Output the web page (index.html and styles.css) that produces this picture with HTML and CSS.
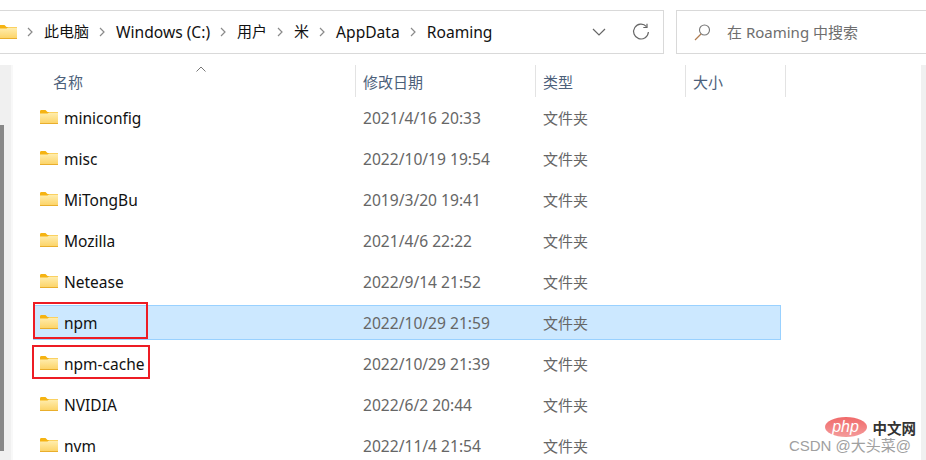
FILE: index.html
```html
<!DOCTYPE html>
<html lang="zh-CN">
  <head>
    <meta charset="UTF-8" />
    <title>Roaming</title>
    <link rel="stylesheet" href="styles.css">
  </head>
  <body>
    <svg class="defs" width="0" height="0">
      <defs>
        <linearGradient id="folderFill" x1="0" y1="0" x2="0" y2="1">
          <stop offset="0" stop-color="#ffeeb0" />
          <stop offset="1" stop-color="#fcd263" />
        </linearGradient>
        <symbol id="folder" viewBox="0 0 18 14">
          <path d="M0 1.5C0 .7.5 0 1.3 0h4.2l2 2H18v3H0z" fill="#f5b312" />
          <path d="M0 3.5h7.5l1.5-1H18V14H0z" fill="url(#folderFill)" />
          <path d="M0 13h18v1H0z" fill="#e9ae2c" />
        </symbol>
        <symbol id="chev" viewBox="0 0 6 10">
          <path d="M1 1l4 4-4 4" fill="none" stroke="#8a8a8a" stroke-width="1.2" />
        </symbol>
      </defs>
    </svg>

    <div class="toolbar">
      <div class="address">
        <svg class="crumb-folder"><use href="#folder" /></svg>
        <svg class="chev"><use href="#chev" /></svg>
        <span class="cjk">此电脑</span>
        <svg class="chev"><use href="#chev" /></svg>
        <span>Windows (C:)</span>
        <svg class="chev"><use href="#chev" /></svg>
        <span class="cjk">用户</span>
        <svg class="chev"><use href="#chev" /></svg>
        <span class="cjk">米</span>
        <svg class="chev"><use href="#chev" /></svg>
        <span>AppData</span>
        <svg class="chev"><use href="#chev" /></svg>
        <span>Roaming</span>
        <div class="address-tools">
          <svg width="14" height="8" viewBox="0 0 14 8"><path d="M1 1l6 6 6-6" fill="none" stroke="#666" stroke-width="1.2" /></svg>
          <svg width="18" height="18" viewBox="0 0 18 18"><path d="M14.5 3.6A7.4 7.4 0 1 0 16.4 9" fill="none" stroke="#666" stroke-width="1.2" /><path d="M15 .8v3.7h-3.7" fill="none" stroke="#666" stroke-width="1.2" /></svg>
        </div>
      </div>
      <div class="search">
        <svg width="17" height="17" viewBox="0 0 17 17"><circle cx="10.5" cy="6" r="5" fill="none" stroke="#777" stroke-width="1.1" /><path d="M7 10l-6 6" stroke="#b07c50" stroke-width="1.2" /></svg>
        <span>在 Roaming 中搜索</span>
      </div>
    </div>

    <div class="main">
      <div class="left-track"><div class="left-thumb"></div></div>
      <div class="content">
        <div class="sort-arrow">
          <svg width="10" height="6" viewBox="0 0 10 6"><path d="M.5 5.5L5 1l4.5 4.5" fill="none" stroke="#777" stroke-width="1" /></svg>
        </div>
        <div class="header">
          <div class="col col-name">名称</div>
          <div class="col col-date">修改日期</div>
          <div class="col col-type">类型</div>
          <div class="col col-size">大小</div>
        </div>

        <div class="row">
          <div class="cell-name"><svg class="folder"><use href="#folder" /></svg>miniconfig</div>
          <div class="cell-date">2021/4/16 20:33</div>
          <div class="cell-type">文件夹</div>
        </div>
        <div class="row">
          <div class="cell-name"><svg class="folder"><use href="#folder" /></svg>misc</div>
          <div class="cell-date">2022/10/19 19:54</div>
          <div class="cell-type">文件夹</div>
        </div>
        <div class="row">
          <div class="cell-name"><svg class="folder"><use href="#folder" /></svg>MiTongBu</div>
          <div class="cell-date">2019/3/20 19:41</div>
          <div class="cell-type">文件夹</div>
        </div>
        <div class="row">
          <div class="cell-name"><svg class="folder"><use href="#folder" /></svg>Mozilla</div>
          <div class="cell-date">2021/4/6 22:22</div>
          <div class="cell-type">文件夹</div>
        </div>
        <div class="row">
          <div class="cell-name"><svg class="folder"><use href="#folder" /></svg>Netease</div>
          <div class="cell-date">2022/9/14 21:52</div>
          <div class="cell-type">文件夹</div>
        </div>
        <div class="row selected">
          <div class="cell-name"><svg class="folder"><use href="#folder" /></svg>npm</div>
          <div class="cell-date">2022/10/29 21:59</div>
          <div class="cell-type">文件夹</div>
          <div class="mark mark-npm"></div>
        </div>
        <div class="row">
          <div class="cell-name"><svg class="folder"><use href="#folder" /></svg>npm-cache</div>
          <div class="cell-date">2022/10/29 21:39</div>
          <div class="cell-type">文件夹</div>
          <div class="mark mark-cache"></div>
        </div>
        <div class="row">
          <div class="cell-name"><svg class="folder"><use href="#folder" /></svg>NVIDIA</div>
          <div class="cell-date">2022/6/2 20:44</div>
          <div class="cell-type">文件夹</div>
        </div>
        <div class="row">
          <div class="cell-name"><svg class="folder"><use href="#folder" /></svg>nvm</div>
          <div class="cell-date">2022/11/4 21:54</div>
          <div class="cell-type">文件夹</div>
        </div>
      </div>
      <div class="right-track"></div>
    </div>

    <div class="watermark">
      <div class="wm-top"><span class="wm-logo">php</span><span class="wm-cn">中文网</span></div>
      <div class="wm-csdn">CSDN @大头菜@</div>
    </div>
  </body>
</html>
```

FILE: styles.css
```css
html,
body {
  margin: 0;
  padding: 0;
}
body {
  width: 926px;
  height: 460px;
  overflow: hidden;
  position: relative;
  background: #fff;
  color: #111;
  font-family: "Noto Sans", "Open Sans", "Noto Sans CJK SC", sans-serif;
  font-size: 15px;
}
.defs {
  display: block;
  height: 0;
}
.toolbar {
  height: 65px;
  padding-top: 10px;
  box-sizing: border-box;
  display: flex;
  margin-left: -10px;
}
.address {
  width: 674px;
  height: 44px;
  box-sizing: border-box;
  border: 1px solid #d9d9d9;
  display: flex;
  align-items: center;
  padding-left: 8px;
  font-size: 15.6px;
}
.address .cjk {
  font-size: 15px;
  padding-bottom: 3px;
}
.crumb-folder {
  width: 18px;
  height: 14px;
}
.chev {
  width: 6px;
  height: 10px;
  margin: 0 11px 0 10px;
}
.address-tools {
  margin-left: auto;
  margin-right: 13px;
  display: flex;
  align-items: center;
  gap: 26px;
}
.search {
  margin-left: 12px;
  flex: 1;
  height: 44px;
  box-sizing: border-box;
  border: 1px solid #d9d9d9;
  border-right: none;
  display: flex;
  align-items: center;
  padding-left: 17px;
  gap: 16px;
  color: #6e6e6e;
}
.search span {
  padding-bottom: 2px;
}
.main {
  display: flex;
  height: 395px;
}
.left-track {
  width: 11px;
  background: #f0f0f0;
  border-right: 2px solid #f8f8f8;
  flex: none;
}
.left-thumb {
  width: 4px;
  height: 326px;
  margin-top: 60px;
  background: #888;
}
.content {
  flex: 1;
  position: relative;
  padding-left: 20px;
}
.right-track {
  width: 5px;
  background: #f0f0f0;
  flex: none;
}
.sort-arrow {
  position: absolute;
  left: 183px;
  top: 1px;
  line-height: 0;
}
.header {
  display: flex;
  height: 32px;
  margin-bottom: 3px;
  color: #4c607a;
}
.col {
  box-sizing: border-box;
  height: 32px;
  padding-top: 6px;
  padding-left: 7px;
  border-right: 1px solid #e3e3e3;
}
.col-name {
  width: 323px;
  padding-left: 20px;
}
.col-date {
  width: 180px;
}
.col-type {
  width: 150px;
}
.col-size {
  width: 100px;
}
.row {
  display: flex;
  align-items: center;
  height: 35px;
  margin-bottom: 6px;
  position: relative;
  box-sizing: border-box;
  width: 748px;
  border: 1px solid transparent;
}
.row.selected {
  background: #cce8ff;
  border-color: #99d1ff;
}
.cell-name {
  width: 322px;
  display: flex;
  align-items: center;
  padding-left: 6px;
  box-sizing: border-box;
  gap: 6px;
  font-size: 15.5px;
}
.folder {
  width: 18px;
  height: 14px;
  flex: none;
  margin-top: -1px;
}
.cell-date {
  width: 180px;
  padding-left: 7px;
  box-sizing: border-box;
  color: #666;
  font-size: 15.6px;
}
.cell-type {
  padding-left: 7px;
  color: #666;
}
.mark {
  position: absolute;
  box-sizing: border-box;
  border: 2px solid #ed1c24;
}
.mark-npm {
  left: -1px;
  top: -4px;
  width: 115px;
  height: 37px;
}
.mark-cache {
  left: -2px;
  top: -2px;
  width: 118px;
  height: 34px;
}
.watermark {
  position: absolute;
  right: 10px;
  top: 417px;
  text-align: right;
}
.wm-top {
  display: flex;
  align-items: center;
  justify-content: flex-end;
  height: 20px;
}
.wm-logo {
  width: 42px;
  height: 20px;
  border-radius: 50%;
  background: linear-gradient(#f06a6a, #f49a9a);
  color: #fff;
  font-family: "Liberation Sans", sans-serif;
  font-style: italic;
  font-size: 16px;
  line-height: 19px;
  text-align: center;
  margin-right: 6px;
}
.wm-cn {
  font-size: 14.5px;
  color: #333;
  font-weight: 700;
}
.wm-csdn {
  font-family: "Liberation Sans", "Noto Sans CJK SC", sans-serif;
  font-size: 15px;
  line-height: 17px;
  color: #a0a0a0;
  margin-right: 5px;
}
```
